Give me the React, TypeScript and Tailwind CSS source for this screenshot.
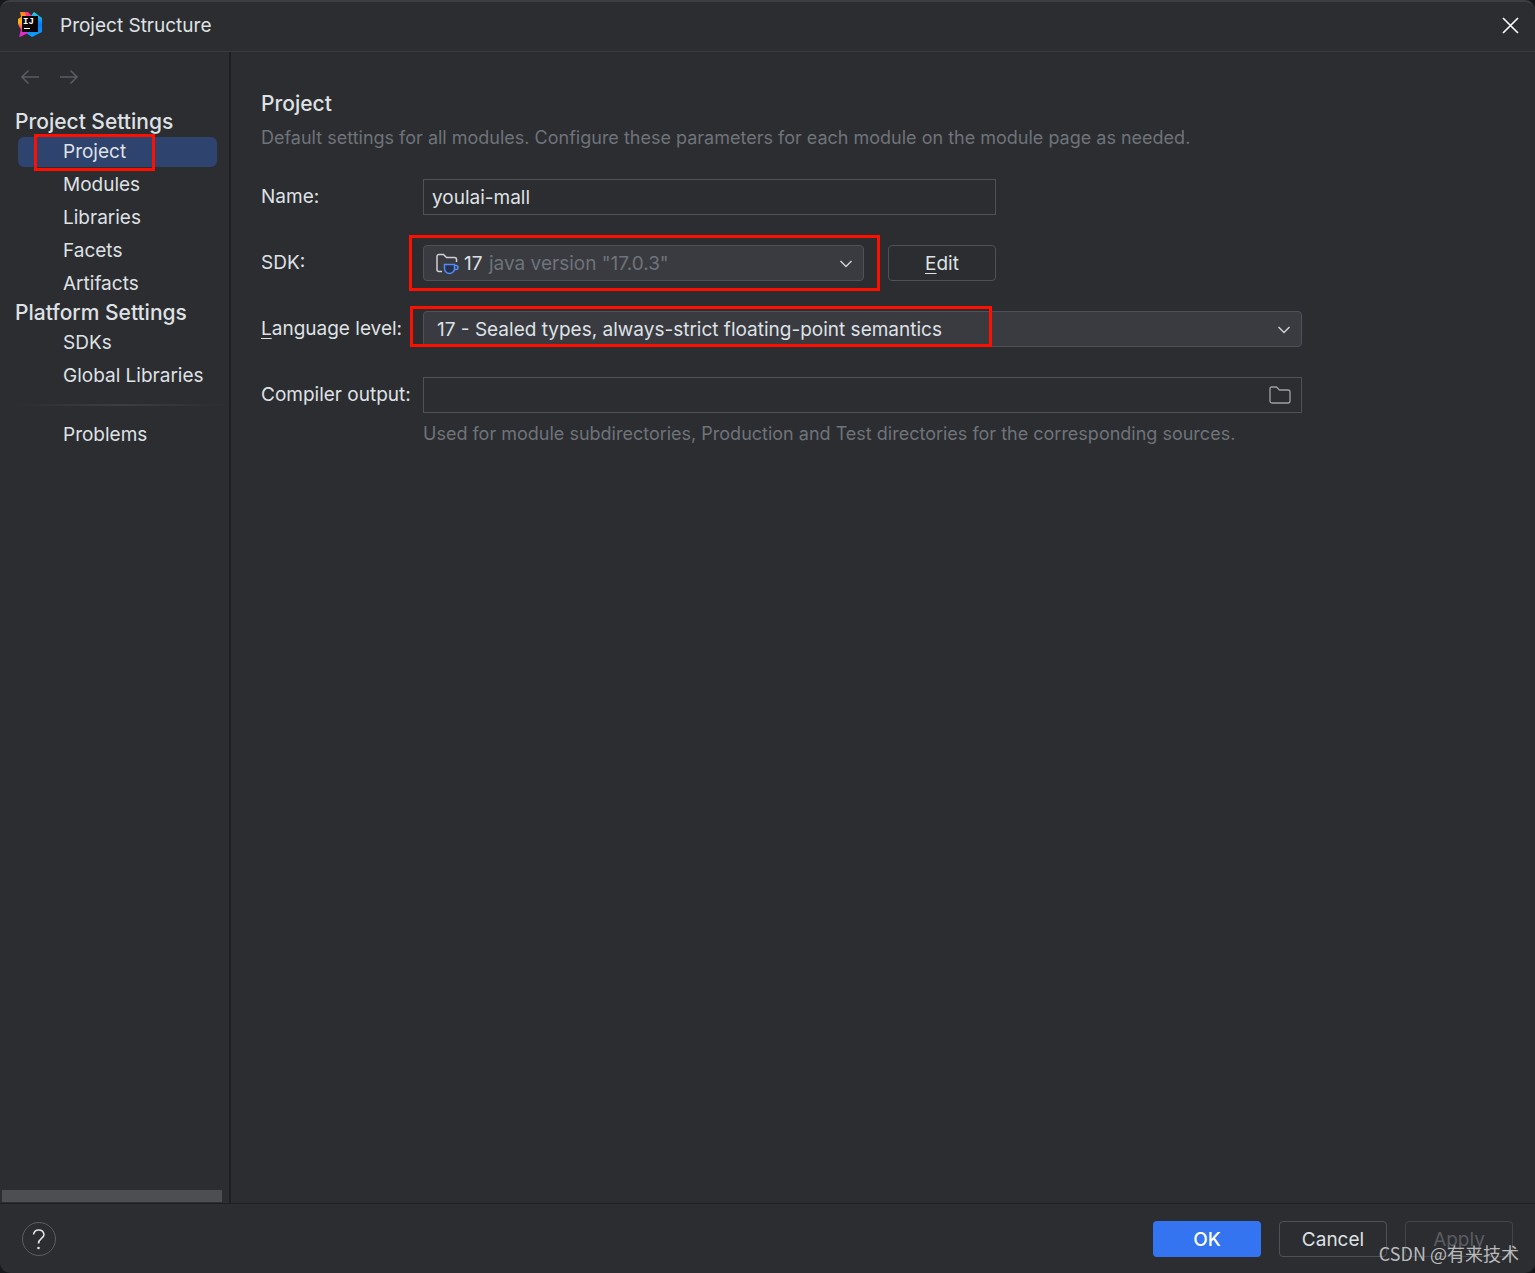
import { useState } from 'react';
import type { ReactNode } from 'react';

const projectItems = ['Project', 'Modules', 'Libraries', 'Facets', 'Artifacts'];
const platformItems = ['SDKs', 'Global Libraries'];

function Logo() {
  return (
    <svg width="26" height="26" viewBox="0 0 26 26" aria-hidden="true">
      <defs>
        <linearGradient id="warm" x1="0" y1="0" x2="0" y2="1">
          <stop offset="0" stopColor="#fc801d" />
          <stop offset="0.4" stopColor="#fdb60d" />
          <stop offset="0.7" stopColor="#ff318c" />
          <stop offset="1" stopColor="#d12ad6" />
        </linearGradient>
        <linearGradient id="cool" x1="0" y1="0" x2="0" y2="1">
          <stop offset="0" stopColor="#21d7e8" />
          <stop offset="0.5" stopColor="#087cfa" />
          <stop offset="1" stopColor="#0aa5fb" />
        </linearGradient>
      </defs>
      <polygon points="13,5 17,0 25,6 25,20 15,25 9,21" fill="url(#cool)" />
      <polygon points="3,0 8,0 14,5 13,18 2,25 4,18 1,12 1,7 4,5" fill="url(#warm)" />
      <polygon points="8,0 11,0 16,5 10,8" fill="#ff318c" />
      <polygon points="4,17 9,18 11,21 3,25" fill="#e02ac9" />
      <rect x="5" y="4" width="16" height="16" fill="#0b0508" />
      <text x="6" y="12" fontSize="9" fontWeight="700" fill="#fff" fontFamily="Liberation Mono, monospace">IJ</text>
      <rect x="7" y="16" width="6" height="1" fill="#fff" />
    </svg>
  );
}

function Chevron() {
  return (
    <svg width="14" height="8" viewBox="0 0 14 8" fill="none" stroke="#ced0d6" strokeWidth="1.5" aria-hidden="true" className="pointer-events-none absolute right-[11px] top-[15px]">
      <path d="M1.5 1 7 6.5 12.5 1" />
    </svg>
  );
}

function JdkIcon() {
  return (
    <svg width="24" height="22" viewBox="0 0 24 22" fill="none" aria-hidden="true" className="pointer-events-none absolute left-3 top-2">
      <path d="M7 18.500H4A2 2 0 0 1 2 16.500V3.500A2 2 0 0 1 4 1.500H8.500L11.500 4.500H19.500A2 2 0 0 1 21.500 6.500V9" stroke="#ced0d6" strokeWidth="1.500" />
      <path d="M9.500 11.500H19.500V15.500A5 5 0 0 1 14.500 20.500A5 5 0 0 1 9.500 15.500Z" fill="#25324d" stroke="#548af7" strokeWidth="1.500" />
      <path d="M19.500 12.500H21A2 2 0 0 1 21 16.500H19.500" stroke="#548af7" strokeWidth="1.500" />
    </svg>
  );
}

function FolderIcon() {
  return (
    <svg width="22" height="18" viewBox="0 0 22 18" fill="none" stroke="#9da0a8" strokeWidth="1.3" aria-hidden="true">
      <path d="M1 2.500A1.500 1.500 0 0 1 2.500 1H7.500L10.500 4H19A2 2 0 0 1 21 6V15A2 2 0 0 1 19 17H3A2 2 0 0 1 1 15Z" />
    </svg>
  );
}

function NavItem({ name, active, onSelect, children }: { name: string; active: boolean; onSelect: (name: string) => void; children?: ReactNode }) {
  return (
    <li className="relative h-[33px] pl-[18px] pr-3 pt-0.5">
      <button
        onClick={() => onSelect(name)}
        className={`block h-[30px] w-full whitespace-nowrap rounded-md pl-[45px] text-left leading-[30px] ${active ? 'bg-[#2e436e]' : ''}`}
      >
        {name}
      </button>
      {children}
    </li>
  );
}

export default function App() {
  const [page, setPage] = useState('Project');
  const [name, setName] = useState('youlai-mall');
  const [output, setOutput] = useState('');

  return (
    <div className="min-h-screen bg-[#17181a] font-['Inter',sans-serif] text-[19px] leading-6 text-[#dfe1e5]">
      <div className="relative flex min-h-screen flex-col overflow-hidden rounded-[10px] border-t-2 border-[#3c3e42] bg-[#2b2d30]">
        {/* Title bar */}
        <header className="flex h-[50px] items-center border-b border-[#393b40] pb-[3px] pl-[17px] pr-4">
          <Logo />
          <h1 className="ml-[17px] flex-1 pt-0.5">Project Structure</h1>
          <button aria-label="Close">
            <svg width="17" height="17" viewBox="0 0 17 17" stroke="#fff" strokeWidth="1.6" aria-hidden="true">
              <path d="M1 1 16 16M16 1 1 16" />
            </svg>
          </button>
        </header>

        <div className="flex flex-1">
          {/* Navigation */}
          <nav className="flex w-[231px] shrink-0 flex-col border-r-2 border-[#1e1f22]">
            <div className="flex gap-5 pb-6 pl-5 pt-[17px]">
              <button aria-label="Back" disabled>
                <svg width="20" height="16" viewBox="0 0 20 16" fill="none" stroke="#5a5d63" strokeWidth="1.5" aria-hidden="true">
                  <path d="M19 8H2M8.500 1.500 2 8 8.500 14.500" />
                </svg>
              </button>
              <button aria-label="Forward" disabled>
                <svg width="20" height="16" viewBox="0 0 20 16" fill="none" stroke="#5a5d63" strokeWidth="1.5" aria-hidden="true">
                  <path d="M0 8H17M10.500 1.500 17 8 10.500 14.500" />
                </svg>
              </button>
            </div>

            <h2 className="h-[26px] pl-[15px] text-[21px] font-medium leading-[26px]">Project Settings</h2>
            <ul>
              {projectItems.map(item => (
                <NavItem key={item} name={item} active={page === item} onSelect={setPage}>
                  {item === 'Project' && (
                    <span className="pointer-events-none absolute -top-px left-[34px] h-[37px] w-[121px] border-3 border-[#ff0f00]" />
                  )}
                </NavItem>
              ))}
            </ul>
            <h2 className="h-[26px] pl-[15px] text-[21px] font-medium leading-[26px]">Platform Settings</h2>
            <ul>
              {platformItems.map(item => (
                <NavItem key={item} name={item} active={page === item} onSelect={setPage} />
              ))}
            </ul>
            <div className="ml-3 mt-3 h-0.5 bg-linear-to-r from-transparent via-[#3c3e42] to-transparent" />
            <ul className="mt-3">
              <NavItem name="Problems" active={page === 'Problems'} onSelect={setPage} />
            </ul>

            <div className="mb-px ml-0.5 mr-[7px] mt-auto h-3 bg-[#4d4e51]" />
          </nav>

          {/* Project page */}
          <main className="min-w-0 flex-1 pl-[30px] pr-6 pt-10">
            <h2 className="text-[21px] font-medium leading-6">Project</h2>
            <p className="mt-[10px] text-[18px] text-[#6f737a]">
              Default settings for all modules. Configure these parameters for each module on the module page as needed.
            </p>

            <form className="mt-[29px] grid max-w-[1041px] grid-cols-[162px_1fr] items-center gap-y-[30px]" onSubmit={e => e.preventDefault()}>
              <label htmlFor="name">Name:</label>
              <input
                id="name"
                value={name}
                onChange={e => setName(e.target.value)}
                className="h-9 w-[573px] border border-[#4e5157] px-2 outline-none"
              />

              <label htmlFor="sdk">SDK:</label>
              <div className="flex w-[573px] gap-6">
                <div className="relative flex-1">
                  <select id="sdk" className="h-9 w-full appearance-none rounded border border-[#4e5157] bg-[#393b40] pl-10 pr-8 pt-0.5 outline-none">
                    <option>17</option>
                  </select>
                  <JdkIcon />
                  <span className="pointer-events-none absolute left-[66px] top-[7px] text-[#6f737a]">java version "17.0.3"</span>
                  <Chevron />
                  <span className="pointer-events-none absolute -inset-y-[10px] -left-[14px] -right-4 border-3 border-[#ff0f00]" />
                </div>
                <button type="button" className="h-9 w-[108px] rounded border border-[#4e5157] pt-0.5">
                  <span className="underline underline-offset-3">E</span>dit
                </button>
              </div>

              <label htmlFor="level">
                <span className="underline underline-offset-3">L</span>anguage level:
              </label>
              <div className="relative">
                <select id="level" className="h-9 w-full appearance-none rounded border border-[#4e5157] bg-[#393b40] pl-[13px] pr-8 pt-0.5 outline-none">
                  <option>17 - Sealed types, always-strict floating-point semantics</option>
                </select>
                <Chevron />
                <span className="pointer-events-none absolute -left-[13px] -top-[5px] h-[41px] w-[582px] border-3 border-[#ff0f00]" />
              </div>

              <label htmlFor="output">Compiler output:</label>
              <div className="flex h-9 items-center border border-[#4e5157] pr-[10px]">
                <input
                  id="output"
                  value={output}
                  onChange={e => setOutput(e.target.value)}
                  className="min-w-0 flex-1 px-2 outline-none"
                />
                <button type="button" aria-label="Browse">
                  <FolderIcon />
                </button>
              </div>
            </form>
            <p className="ml-[162px] mt-[9px] text-[18px] text-[#6f737a]">
              Used for module subdirectories, Production and Test directories for the corresponding sources.
            </p>
          </main>
        </div>

        {/* Dialog buttons */}
        <footer className="flex h-[70px] items-center gap-[18px] border-t border-[#1e1f22] px-[22px]">
          <button aria-label="Help" className="mr-auto flex size-[34px] items-center justify-center rounded-full border border-[#5a5d63]">
            <svg width="14" height="22" viewBox="0 0 14 22" fill="none" stroke="#dfe1e5" strokeWidth="1.6" aria-hidden="true">
              <path d="M1.500 6.500A5.300 5.300 0 0 1 12 6.500C12 10.500 6.500 10.500 6.500 15.500" />
              <circle cx="6.500" cy="20" r="1.300" fill="#dfe1e5" stroke="none" />
            </svg>
          </button>
          <button className="h-9 w-[108px] rounded bg-[#3574f0] pt-0.5 font-medium text-white">OK</button>
          <button className="h-9 w-[108px] rounded border border-[#4e5157] pt-0.5">Cancel</button>
          <button disabled className="h-9 w-[108px] rounded border border-[#43454a] pt-0.5 text-[#5a5d63]">Apply</button>
        </footer>

        <div className="pointer-events-none absolute bottom-2 right-4 font-['Noto_Sans_CJK_SC',sans-serif] text-[18px] text-[#b9babc]">
          CSDN @有来技术
        </div>
      </div>
    </div>
  );
}
